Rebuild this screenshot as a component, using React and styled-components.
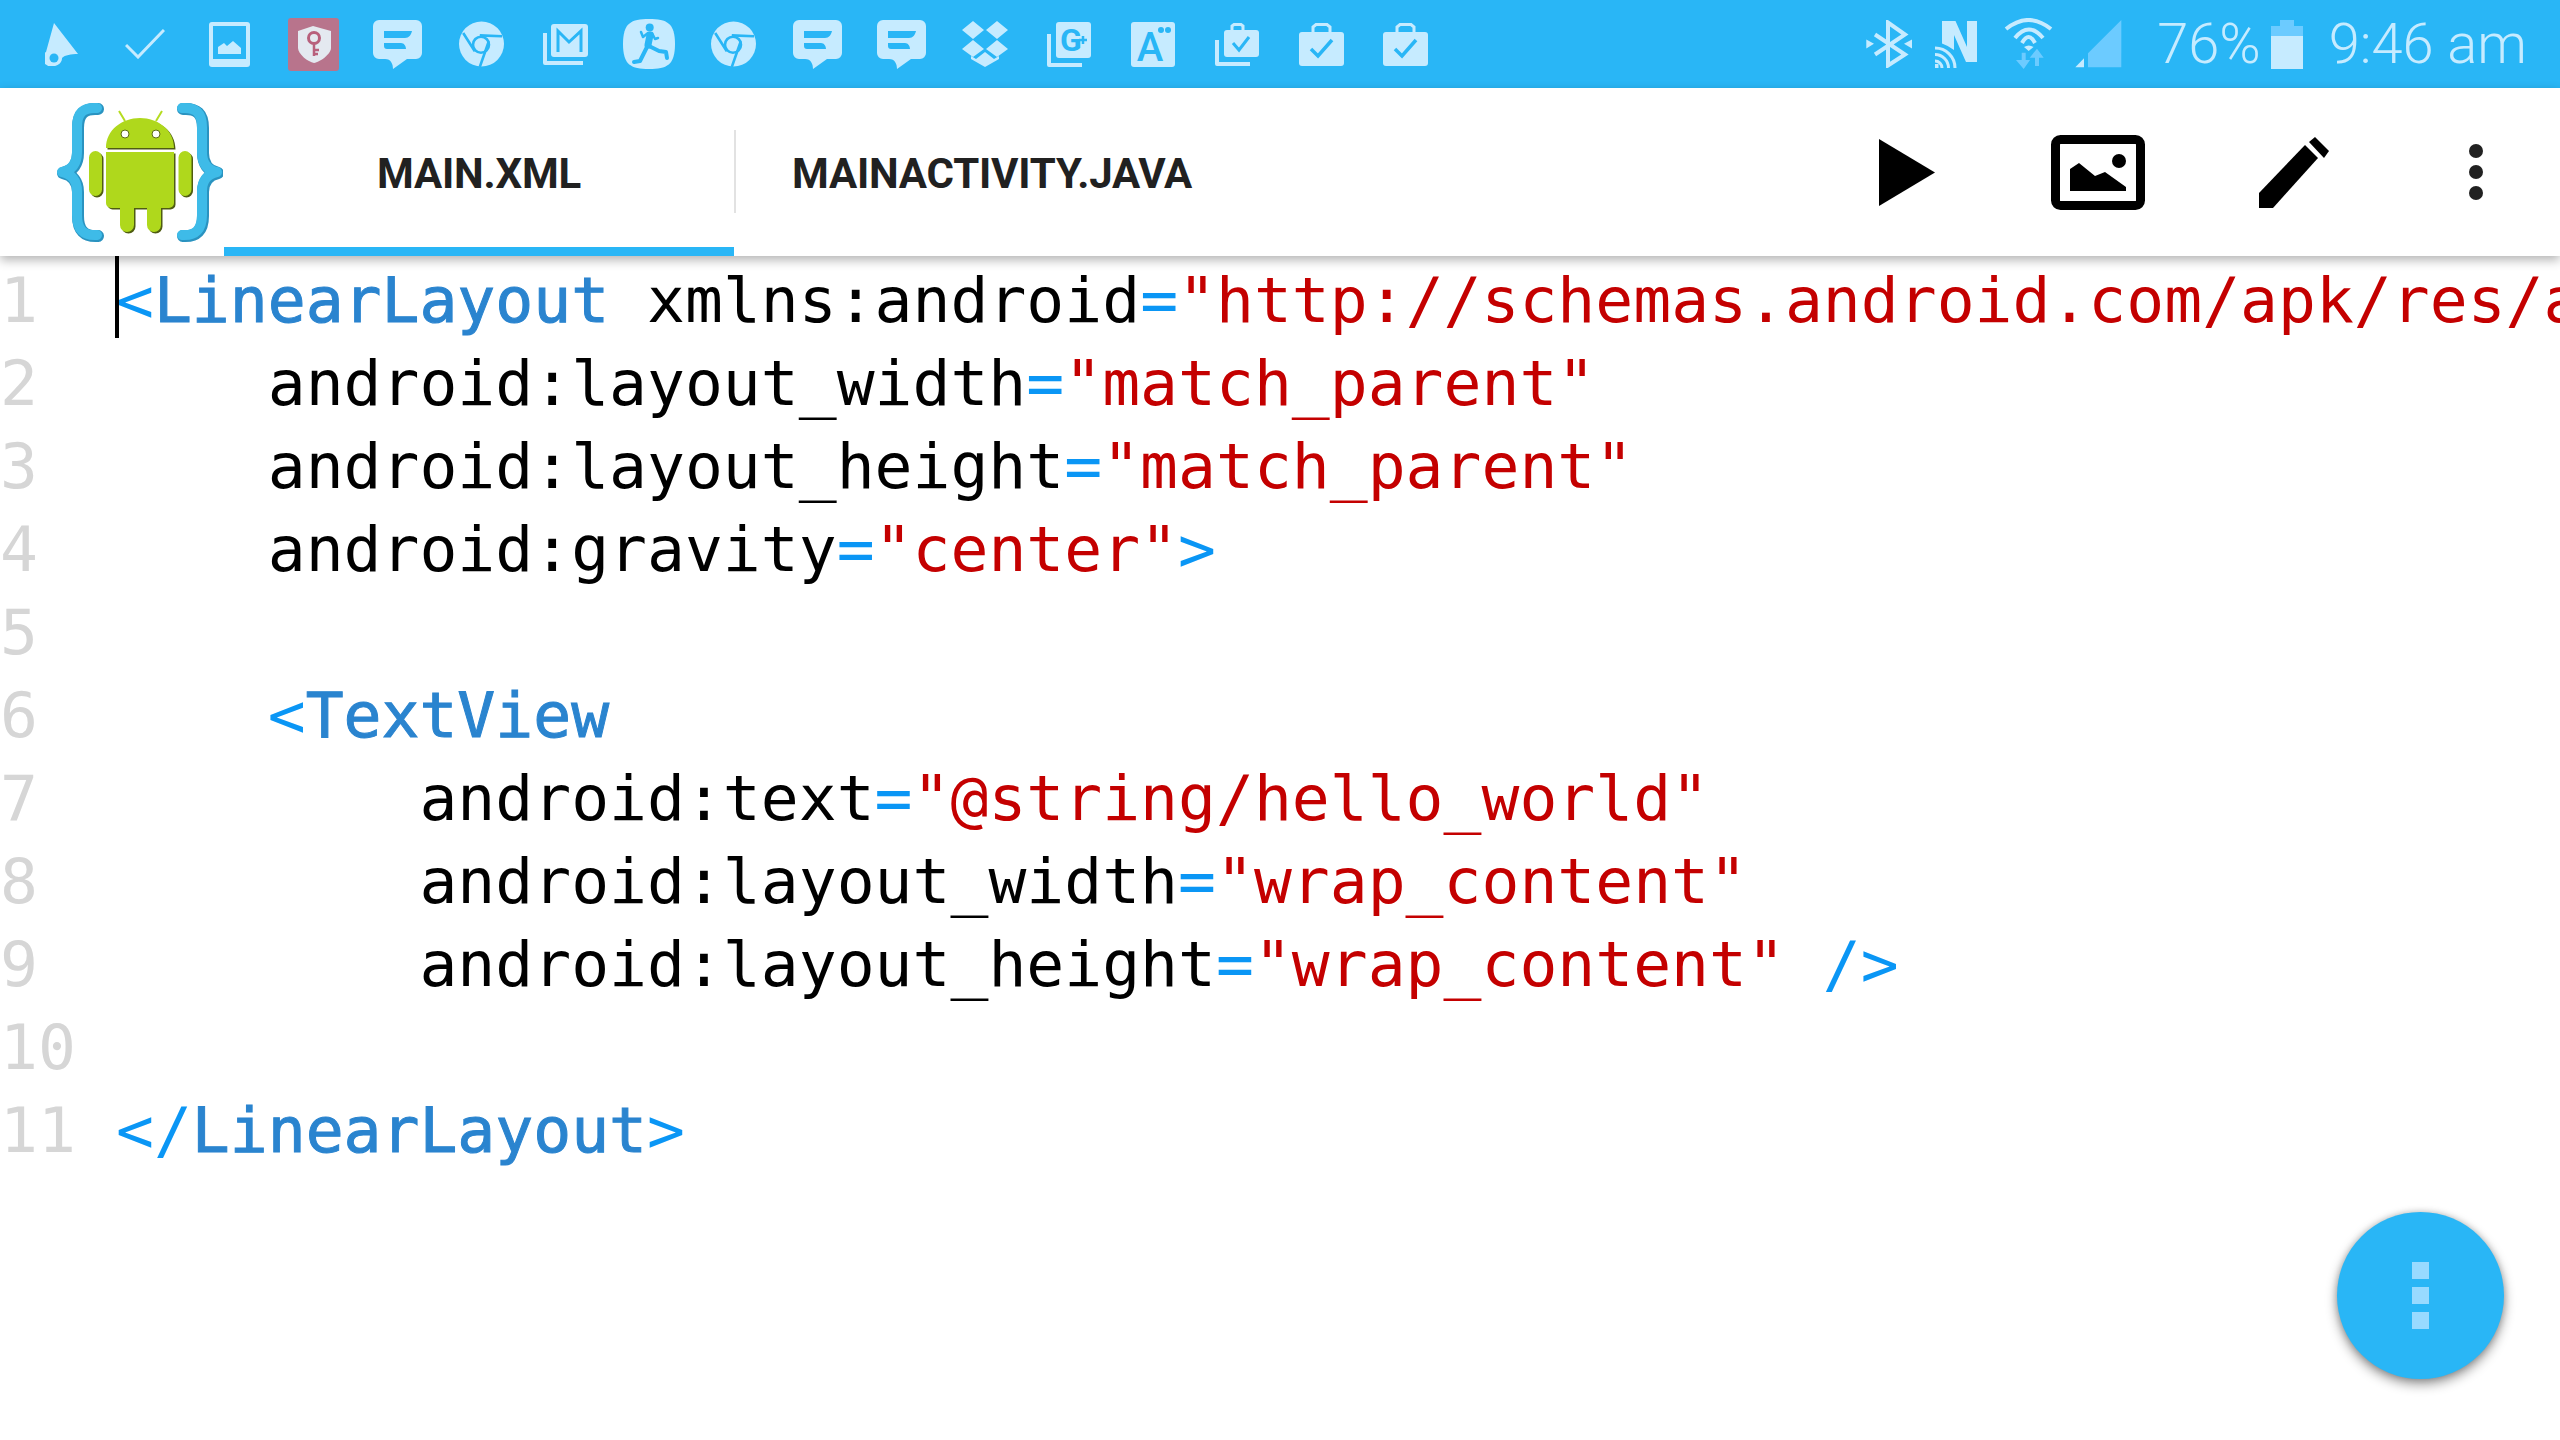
import React from 'react'
import styled, { createGlobalStyle } from 'styled-components'

const BLUE = '#29b6f6'
const ICON = '#c6ebff'
const DIM = '#6ccbff'

const GlobalStyle = createGlobalStyle`
  html, body {
    margin: 0;
    padding: 0;
    background: #fff;
  }
`

const Screen = styled.div`
  position: relative;
  width: 2560px;
  height: 1440px;
  overflow: hidden;
  background: #fff;
  font-family: Roboto, 'Liberation Sans', sans-serif;
`

const StatusBar = styled.div`
  display: flex;
  align-items: center;
  height: 88px;
  padding: 0 33px 0 19px;
  box-sizing: border-box;
  background: ${BLUE};
`

const NoteIcons = styled.div`
  display: flex;
  align-items: center;
`

const NoteCell = styled.div`
  display: flex;
  align-items: center;
  justify-content: center;
  width: 84px;
  height: 88px;
`

const SystemIcons = styled.div`
  display: flex;
  align-items: center;
  margin-left: auto;
`

const SystemSlot = styled.div`
  display: flex;
  margin-left: ${props => props.$gap}px;
`

const StatusText = styled.span`
  margin-left: ${props => props.$gap}px;
  font-size: 56px;
  font-weight: 300;
  line-height: 88px;
  color: ${ICON};
  white-space: nowrap;
`

const Toolbar = styled.div`
  position: relative;
  z-index: 2;
  display: flex;
  align-items: stretch;
  height: 168px;
  background: #fff;
  box-shadow: 0 4px 10px rgba(0, 0, 0, 0.3);
`

const LogoSlot = styled.div`
  display: flex;
  align-items: flex-start;
  box-sizing: border-box;
  width: 224px;
  padding: 14px 0 0 57px;
`

const Tab = styled.div`
  display: flex;
  align-items: center;
  justify-content: ${props => (props.$active ? 'center' : 'flex-start')};
  box-sizing: border-box;
  width: ${props => (props.$active ? '510px' : 'auto')};
  padding: 11px 0 0 ${props => (props.$active ? 0 : '56px')};
  border-bottom: 9px solid ${props => (props.$active ? BLUE : 'transparent')};
  font-size: 42px;
  font-weight: 700;
  letter-spacing: -0.2px;
  color: #212121;
`

const TabDivider = styled.div`
  width: 2px;
  height: 83px;
  margin-top: 42px;
  background: #e2e2e2;
`

const Actions = styled.div`
  display: flex;
  align-items: center;
  margin-left: auto;
  padding-right: 77px;
`

const ActionSlot = styled.div`
  display: flex;
  margin-left: ${props => props.$gap}px;
`

const Editor = styled.div`
  display: flex;
  flex-direction: column;
  padding-top: 3px;
  font-family: 'DejaVu Sans Mono', 'Liberation Mono', monospace;
  font-size: 63px;
`

const Line = styled.div`
  display: flex;
  height: 83px;
  line-height: 83px;
  white-space: pre;
`

const LineNo = styled.span`
  flex: none;
  width: 116px;
  color: #d6d6d6;
`

const Code = styled.span`
  position: relative;
  color: #000;
`

const Caret = styled.span`
  position: absolute;
  left: -1px;
  top: -5px;
  width: 4px;
  height: 84px;
  background: #000;
`

const Punct = styled.span`
  color: #0a96f5;
`

const TagName = styled.span`
  color: #2a84cf;
  -webkit-text-stroke: 1px #2a84cf;
`

const Str = styled.span`
  color: #c40000;
`

const Fab = styled.div`
  position: absolute;
  left: 2337px;
  top: 1212px;
  display: flex;
  flex-direction: column;
  align-items: center;
  justify-content: center;
  gap: 8px;
  width: 167px;
  height: 167px;
  border-radius: 50%;
  background: ${BLUE};
  box-shadow: 0 5px 12px rgba(0, 0, 0, 0.42), 0 0 6px rgba(0, 0, 0, 0.18);
`

const FabDot = styled.span`
  width: 17px;
  height: 17px;
  background: #98daff;
`

const Cursor = () => (
  <svg width="33" height="43" viewBox="0 0 33 43">
    <path fill={ICON} d="M9 0 L33 31 C26 31 20 32 17 35 A10 8 0 1 1 1 29 Z" />
    <ellipse cx="9" cy="35" rx="4.5" ry="4.5" fill={BLUE} />
  </svg>
)

const Check = () => (
  <svg width="40" height="30" viewBox="0 0 40 30">
    <path fill="none" stroke={ICON} strokeWidth="3" d="M1 16 L13 28 L39 1" />
  </svg>
)

const Tablet = () => (
  <svg width="41" height="45" viewBox="0 0 41 45">
    <rect width="41" height="45" rx="3" fill={ICON} />
    <rect x="4" y="4" width="33" height="33" fill={BLUE} />
    <path fill={ICON} d="M9 32 V25 L15 21 L18 24 L24 19 L32 26 V32 Z" />
  </svg>
)

const KeyShield = () => (
  <svg width="51" height="53" viewBox="0 0 51 53">
    <rect width="51" height="53" rx="3" fill="#b8748c" />
    <path fill="#e4e9f0" d="M25 8 L43 13 V30 C43 36 32 44 26 45 C20 44 10 36 10 30 V13 Z" />
    <circle cx="26" cy="20" r="5.5" fill="none" stroke="#b8607c" strokeWidth="3" />
    <path fill="none" stroke="#b8607c" strokeWidth="2.5" d="M26 25 V38 M26 32 H31 M26 36 H30" />
  </svg>
)

const Bubble = () => (
  <svg width="49" height="49" viewBox="0 0 49 49">
    <path fill={ICON} d="M6 0 H43 A6 6 0 0 1 49 6 V33 A6 6 0 0 1 43 39 H34 L20 49 C20 44 18 39 12 39 H6 A6 6 0 0 1 0 33 V6 A6 6 0 0 1 6 0 Z" />
    <path fill={BLUE} d="M11 11 H39 C38 15 36 18 32 18 H11 Z M11 23 H28 C31 23 33 26 33 29 H14 C12 29 11 28 11 26 Z" />
  </svg>
)

const Chrome = () => (
  <svg width="45" height="46" viewBox="0 0 45 46">
    <circle cx="22.5" cy="23" r="22.5" fill={ICON} />
    <circle cx="22" cy="23.7" r="8" fill={ICON} stroke={BLUE} strokeWidth="2.6" />
    <path
      fill="none"
      stroke={BLUE}
      strokeWidth="2.6"
      d="M4.2 12 L15.8 30.3 M20.8 14.4 L43 15.3 M29.8 20.3 L20.8 46"
    />
  </svg>
)

const Gmail = () => (
  <svg width="45" height="41" viewBox="0 0 45 41">
    <path fill={ICON} d="M0 9 H4 V37 H40 V41 H2 A2 2 0 0 1 0 39 Z" />
    <rect x="8" y="0" width="37" height="33" rx="3" fill={ICON} />
    <path fill="none" stroke={BLUE} strokeWidth="3" d="M15 28 V7 L26 18 L38 7 V28" />
  </svg>
)

const Runner = () => (
  <svg width="52" height="52" viewBox="0 0 52 52">
    <path fill={ICON} d="M26 1 C44 1 52 5 52 26 C52 47 44 51 26 51 C8 51 0 47 0 26 C0 5 8 1 26 1 Z" />
    <circle cx="26.7" cy="9.5" r="4" fill={BLUE} />
    <path fill="none" stroke={BLUE} strokeWidth="7" strokeLinecap="round" d="M27 17 L25 27" />
    <path
      fill="none"
      stroke={BLUE}
      strokeWidth="2.5"
      strokeLinecap="round"
      strokeLinejoin="round"
      d="M25 15 L20 19 L18 14 M29 15 L32 21 L35 20"
    />
    <path
      fill="none"
      stroke={BLUE}
      strokeWidth="4"
      strokeLinecap="round"
      strokeLinejoin="round"
      d="M26 28 L36 33 L43 34 L44 40 M24 29 L20 37 L17 43 L11 44"
    />
  </svg>
)

const Dropbox = () => (
  <svg width="48" height="46" viewBox="0 0 48 46">
    <path
      fill={ICON}
      d="M12 0 L23 9 L12 18 L1 9 Z M36 0 L47 9 L36 18 L25 9 Z M12 19 L23 28 L12 36 L1 28 Z M36 19 L47 28 L36 36 L25 28 Z"
    />
    <path fill={ICON} d="M24 31 L33 38 L38 35 V38 L24 46 L10 38 V35 L15 38 Z" />
  </svg>
)

const GooglePlus = () => (
  <svg width="44" height="45" viewBox="0 0 44 45">
    <path fill={ICON} d="M0 12 H4 V41 H35 V45 H2 A2 2 0 0 1 0 43 Z" />
    <rect x="9" y="0" width="35" height="36" rx="3" fill={ICON} />
    <text x="24" y="29" fontFamily="Roboto, sans-serif" fontSize="32" fontWeight="700" textAnchor="middle" fill={BLUE}>G</text>
    <path stroke={BLUE} strokeWidth="2.5" d="M32 18 H40 M36 14 V22" />
  </svg>
)

const FontA = () => (
  <svg width="44" height="45" viewBox="0 0 44 45">
    <rect width="44" height="45" rx="3" fill={ICON} />
    <text x="19" y="39" fontFamily="Roboto, sans-serif" fontSize="40" fontWeight="500" textAnchor="middle" fill={BLUE}>A</text>
    <circle cx="30" cy="8" r="3" fill={BLUE} />
    <circle cx="37" cy="8" r="3" fill={BLUE} />
  </svg>
)

const Bag = () => (
  <svg width="45" height="43" viewBox="0 0 45 43">
    <path fill="none" stroke={ICON} strokeWidth="3" d="M14 10 V4 L17 1.5 H28 L31 4 V10" />
    <rect y="9" width="45" height="34" rx="3" fill={ICON} />
    <path fill="none" stroke={BLUE} strokeWidth="3.5" d="M12 26 L19 33 L33 17" />
  </svg>
)

const BagStack = () => (
  <svg width="44" height="43" viewBox="0 0 44 43">
    <path fill={ICON} d="M0 17 H4 V39 H35 V43 H2 A2 2 0 0 1 0 41 Z" />
    <path fill="none" stroke={ICON} strokeWidth="3" d="M17 9 V3 L19 1.5 H26 L28 3 V9" />
    <rect x="9" y="7" width="35" height="27" rx="3" fill={ICON} />
    <path fill="none" stroke={BLUE} strokeWidth="3" d="M18 20 L24 27 L34 14" />
  </svg>
)

const Bluetooth = () => (
  <svg width="46" height="48" viewBox="7 10.5 46 48">
    <path fill="none" stroke={ICON} strokeWidth="4" d="M16 25 L46 45 L29 56 V13 L46 25 L16 45" />
    <path fill={ICON} d="M7.3 30 L15 34.3 L7.3 39 Z M53 30 L45 34.3 L53 39 Z" />
  </svg>
)

const Nfc = () => (
  <svg width="42" height="49" viewBox="76 10 42 49">
    <path fill={ICON} d="M83 11 H96.5 L108 37 V11 H118 V52 H107 L95 25 V40 Q90 36 83 33.5 Z" />
    <path
      fill="none"
      stroke={ICON}
      strokeWidth="3"
      d="M76 38 A20 20 0 0 1 96 58 M76 44.5 A13.5 13.5 0 0 1 89.5 58 M76 51 A7 7 0 0 1 83 58"
    />
    <rect x="76" y="54" width="3.5" height="4" fill={ICON} />
  </svg>
)

const Wifi = () => (
  <svg width="50" height="52" viewBox="146 7 50 52">
    <path
      fill="none"
      stroke={ICON}
      strokeWidth="4"
      d="M148 18 Q170.7 0 193 18 M157 27 Q170.7 10 185 27 M164 32 Q170.7 20 177 32"
    />
    <path fill={ICON} d="M166 36 Q170.7 33 175.5 36 L170.7 40 Z" />
    <path fill={DIM} d="M163.7 41.7 H167.7 V49 H172 L165.7 58 L158 49 H163.7 Z M179 37.7 L185.7 46.7 H181 V55 H177 V46.7 H171.7 Z" />
  </svg>
)

const Signal = () => (
  <svg width="47" height="48" viewBox="217 10 47 48">
    <path fill={DIM} d="M263.3 10 V57.3 H230 V43.3 Z" />
    <path fill={ICON} d="M217.3 57.3 L226 48.3 V57.3 Z" />
  </svg>
)

const Battery = () => (
  <svg width="32" height="49" viewBox="0 0 32 49">
    <path fill={DIM} d="M9 0 H23 V6 H32 V16 H0 V6 H9 Z" />
    <rect y="16" width="32" height="33" fill={ICON} />
  </svg>
)

const Logo = () => (
  <svg width="166" height="142" viewBox="57 102 166 142">
    <defs>
      <path
        id="droid"
        d="M106 148 C106 130 122 118 140 118 C158 118 174 130 174 148 Z M106 152 H174 V203 A5 5 0 0 1 169 208 H161 V225 A7 7 0 0 1 147 225 V208 H134 V225 A7 7 0 0 1 120 225 V208 H111 A5 5 0 0 1 106 203 Z M95.5 151 A6.5 6.5 0 0 1 102 157.5 V189.5 A6.5 6.5 0 0 1 89 189.5 V157.5 A6.5 6.5 0 0 1 95.5 151 Z M185 151 A6.5 6.5 0 0 1 191.5 157.5 V189.5 A6.5 6.5 0 0 1 178.5 189.5 V157.5 A6.5 6.5 0 0 1 185 151 Z"
      />
    </defs>
    <g fill="none" strokeLinecap="round" strokeLinejoin="round">
      <path
        stroke="#2a93c0"
        strokeWidth="12"
        d="M98 109 C84 108 78 114 78 128 V153 C78 164 73 171 63 173 C73 175 78 182 78 192 V216 C78 230 84 237 98 236"
      />
      <path
        stroke="#2a93c0"
        strokeWidth="12"
        d="M183 109 C197 108 203 114 203 128 V153 C203 164 208 171 218 173 C208 175 203 182 203 192 V216 C203 230 197 237 183 236"
      />
      <path
        stroke="#3ebbe8"
        strokeWidth="10"
        d="M97 108 C83 107 77 113 77 127 V152 C77 163 72 170 62 172 C72 174 77 181 77 191 V215 C77 229 83 236 97 235"
      />
      <path
        stroke="#3ebbe8"
        strokeWidth="10"
        d="M182 108 C196 107 202 113 202 127 V152 C202 163 207 170 217 172 C207 174 202 181 202 191 V215 C202 229 196 236 182 235"
      />
    </g>
    <path stroke="#b5dc20" strokeWidth="2" d="M125 121 L119 111 M156 121 L162 111" />
    <use href="#droid" x="1.5" y="1.5" fill="#4f5c12" />
    <use href="#droid" fill="#afd81c" />
    <circle cx="125" cy="134" r="4" fill="#fff" stroke="#5d6d14" strokeWidth="1" />
    <circle cx="156" cy="134" r="4" fill="#fff" stroke="#5d6d14" strokeWidth="1" />
  </svg>
)

const Play = () => (
  <svg width="56" height="67" viewBox="0 0 56 67">
    <path d="M0 0 L56 33.5 L0 67 Z" />
  </svg>
)

const Picture = () => (
  <svg width="94" height="75" viewBox="0 0 94 75">
    <rect x="4.5" y="4.5" width="85" height="66" rx="5" fill="none" stroke="#000" strokeWidth="9" />
    <path d="M19 56 V34 L28 28 L44 41 L54 37 L75 52 V56 Z" />
    <ellipse cx="68" cy="26" rx="7" ry="7" />
  </svg>
)

const Pencil = () => (
  <svg width="70" height="71" viewBox="0 0 70 71">
    <path d="M0 56 L46 8 L59 21 L14 71 H0 Z" />
    <path d="M50 5 L56 0 L70 14 L65 21 Z" />
  </svg>
)

const More = () => (
  <svg width="14" height="56" viewBox="0 0 14 56">
    <g fill="#212121">
      <circle cx="7" cy="7" r="7" />
      <circle cx="7" cy="28" r="7" />
      <circle cx="7" cy="49" r="7" />
    </g>
  </svg>
)

const NOTES = [
  Cursor, Check, Tablet, KeyShield, Bubble, Chrome, Gmail, Runner, Chrome,
  Bubble, Bubble, Dropbox, GooglePlus, FontA, BagStack, Bag, Bag,
]

const Attr = ({ name, value, close }) => (
  <>
    {name}
    <Punct>=</Punct>
    <Str>{value}</Str>
    {close && <Punct>{close}</Punct>}
  </>
)

const LINES = [
  <>
    <Caret />
    <Punct>&lt;</Punct>
    <TagName>LinearLayout</TagName>{' '}
    <Attr name="xmlns:android" value={'"http://schemas.android.com/apk/res/android"'} />
  </>,
  <>{'    '}<Attr name="android:layout_width" value={'"match_parent"'} /></>,
  <>{'    '}<Attr name="android:layout_height" value={'"match_parent"'} /></>,
  <>{'    '}<Attr name="android:gravity" value={'"center"'} close=">" /></>,
  '',
  <>{'    '}<Punct>&lt;</Punct><TagName>TextView</TagName></>,
  <>{'        '}<Attr name="android:text" value={'"@string/hello_world"'} /></>,
  <>{'        '}<Attr name="android:layout_width" value={'"wrap_content"'} /></>,
  <>{'        '}<Attr name="android:layout_height" value={'"wrap_content"'} close=" />" /></>,
  '',
  <><Punct>&lt;/</Punct><TagName>LinearLayout</TagName><Punct>&gt;</Punct></>,
]

export default function App() {
  return (
    <Screen>
      <GlobalStyle />
      <StatusBar>
        <NoteIcons>
          {NOTES.map((Icon, i) => (
            <NoteCell key={i}>
              <Icon />
            </NoteCell>
          ))}
        </NoteIcons>
        <SystemIcons>
          <SystemSlot $gap={0}><Bluetooth /></SystemSlot>
          <SystemSlot $gap={23}><Nfc /></SystemSlot>
          <SystemSlot $gap={27}><Wifi /></SystemSlot>
          <SystemSlot $gap={21}><Signal /></SystemSlot>
          <StatusText $gap={35}>76%</StatusText>
          <SystemSlot $gap={10}><Battery /></SystemSlot>
          <StatusText $gap={26}>9:46 am</StatusText>
        </SystemIcons>
      </StatusBar>
      <Toolbar>
        <LogoSlot>
          <Logo />
        </LogoSlot>
        <Tab $active>MAIN.XML</Tab>
        <TabDivider />
        <Tab>MAINACTIVITY.JAVA</Tab>
        <Actions>
          <ActionSlot $gap={0}><Play /></ActionSlot>
          <ActionSlot $gap={116}><Picture /></ActionSlot>
          <ActionSlot $gap={114}><Pencil /></ActionSlot>
          <ActionSlot $gap={140}><More /></ActionSlot>
        </Actions>
      </Toolbar>
      <Editor>
        {LINES.map((content, i) => (
          <Line key={i}>
            <LineNo>{i + 1}</LineNo>
            <Code>{content}</Code>
          </Line>
        ))}
      </Editor>
      <Fab>
        <FabDot />
        <FabDot />
        <FabDot />
      </Fab>
    </Screen>
  )
}
